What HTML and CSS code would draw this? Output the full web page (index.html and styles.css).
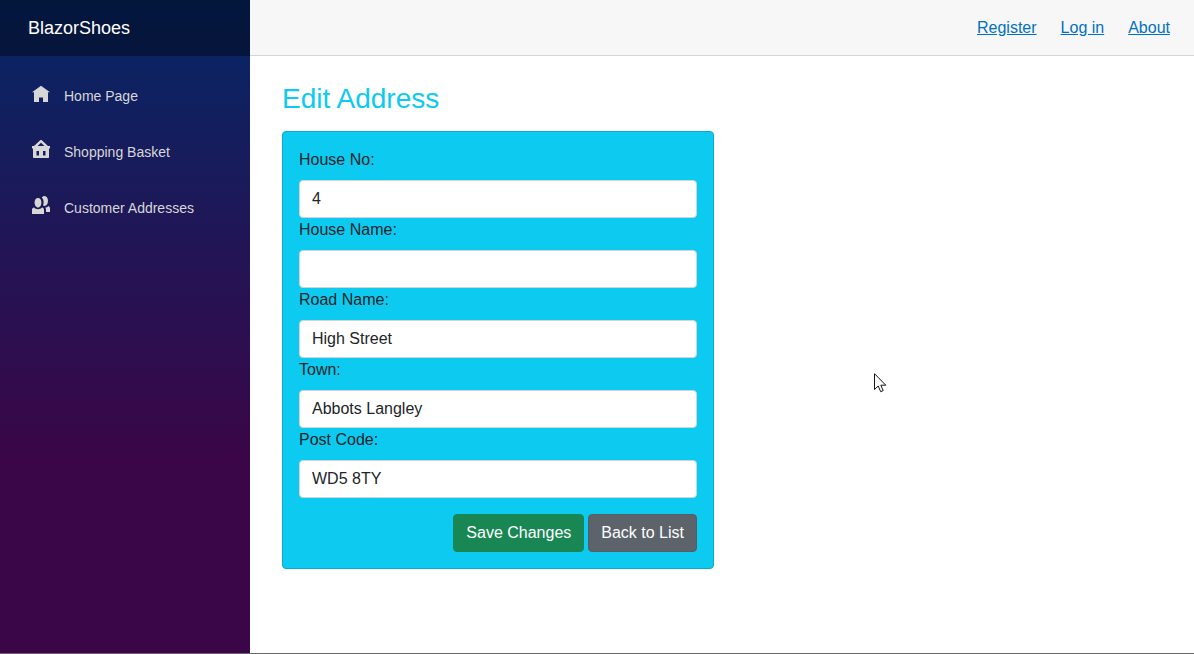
FILE: index.html
```html
<!DOCTYPE html>
<html lang="en">
<head>
  <meta charset="utf-8">
  <meta name="viewport" content="width=device-width, initial-scale=1">
  <title>Edit Address</title>
  <link rel="stylesheet" href="styles.css">
</head>
<body>
  <div class="page">
    <aside class="sidebar">
      <div class="brand-bar"><a class="brand" href="#">BlazorShoes</a></div>
      <nav class="nav">
        <a class="nav-link" href="#">
          <svg class="nav-icon" viewBox="0 0 18 18" aria-hidden="true"><path d="M9 1.800 0 8.300h2V18h5v-4.500h4V18h5V8.300h2z"/></svg>
          <span>Home Page</span>
        </a>
        <a class="nav-link" href="#">
          <svg class="nav-icon" viewBox="0 0 18 18" aria-hidden="true"><path fill-rule="evenodd" d="M9 0c.5 0 .8.1 1.100.4L16 6h2v2.500h-1v8.700c0 .5-.3.8-.8.8H1.800c-.5 0-.8-.3-.8-.8V8.500H0V6h2L7.900.4C8.200.1 8.500 0 9 0zM9 2.800 5.600 6h6.800zM4.500 11v4.500H7V11zM11 11v4.500h2.500V11z"/></svg>
          <span>Shopping Basket</span>
        </a>
        <a class="nav-link" href="#">
          <svg class="nav-icon" viewBox="0 0 18 18" aria-hidden="true"><path d="M12.600 0c-1.200 0-2.200.6-2.800 1.500 1.200 1.200 1.800 2.800 1.800 4.800 0 1.200-.2 2.300-.6 3.200.5.3 1 .4 1.600.4 2.100 0 3.400-2.300 3.400-4.900S14.700 0 12.600 0z"/><path d="M16.400 10c-.9 1-2 1.500-3.200 1.600.6.700.8 1.400.8 2.200V16h4v-3.500c0-1.200-.6-2.100-1.600-2.500z"/><path d="M6 2C3.900 2 2.600 4 2.600 6.500s1.300 5 3.400 5 3.400-2.500 3.400-5S8.100 2 6 2z"/><path d="M2 11.500C.8 11.700 0 12.500 0 13.800V18h12v-4.200c0-1.300-.8-2.100-2-2.300-1 1.200-2.400 1.700-4 1.700s-3-.5-4-1.700z"/></svg>
          <span>Customer Addresses</span>
        </a>
      </nav>
    </aside>
    <div class="main">
      <header class="top-row">
        <a class="top-link" href="#">Register</a>
        <a class="top-link" href="#">Log in</a>
        <a class="top-link" href="#">About</a>
      </header>
      <main class="content">
        <h1 class="title">Edit Address</h1>
        <form class="card">
          <label class="label" for="house-no">House No:</label>
          <input class="field" id="house-no" type="text" value="4">
          <label class="label" for="house-name">House Name:</label>
          <input class="field" id="house-name" type="text" value="">
          <label class="label" for="road-name">Road Name:</label>
          <input class="field" id="road-name" type="text" value="High Street">
          <label class="label" for="town">Town:</label>
          <input class="field" id="town" type="text" value="Abbots Langley">
          <label class="label" for="post-code">Post Code:</label>
          <input class="field" id="post-code" type="text" value="WD5 8TY">
          <div class="actions">
            <button class="button button-save" type="submit">Save Changes</button>
            <button class="button button-back" type="button">Back to List</button>
          </div>
        </form>
      </main>
    </div>
  </div>
  <svg class="pointer" viewBox="0 0 13 20" aria-hidden="true"><path d="M.5.700v15.800l3.700-3.500 2.500 5.700 2.500-1.100-2.400-5.400h5z" fill="#fff" stroke="#14141f"/></svg>
</body>
</html>
```
FILE: styles.css
```css
*,
*::before,
*::after {
  box-sizing: border-box;
}

body {
  margin: 0;
  color: #212529;
  background: #fff;
  font-family: "Liberation Sans", Arial, sans-serif;
  font-size: 16px;
  line-height: 24px;
}

.page {
  display: flex;
  min-height: 100vh;
  border-bottom: 1px solid #696969;
}

.sidebar {
  flex: none;
  width: 250px;
  background-image: linear-gradient(180deg, #052767 0%, #3a0647 70%);
}

.brand-bar {
  display: flex;
  align-items: center;
  height: 56px;
  padding: 0 28px;
  background: rgba(0, 0, 0, 0.4);
}

.brand {
  color: #fff;
  font-size: 18px;
  text-decoration: none;
}

.nav {
  display: flex;
  flex-direction: column;
  gap: 8px;
  padding: 16px 12px;
}

.nav-link {
  display: flex;
  align-items: center;
  gap: 14px;
  height: 48px;
  padding: 0 20px;
  color: #d7d7d7;
  font-size: 14px;
  text-decoration: none;
}

.nav-icon {
  width: 18px;
  height: 18px;
  margin-bottom: 6px;
  fill: currentColor;
}

.main {
  flex: 1;
  min-width: 0;
}

.top-row {
  display: flex;
  align-items: center;
  justify-content: flex-end;
  gap: 24px;
  height: 56px;
  padding: 0 24px;
  background: #f7f7f7;
  border-bottom: 1px solid #d6d5d5;
}

.top-link {
  color: #0071c1;
}

.content {
  padding: 26px 24px 24px 32px;
}

.title {
  margin: 0 0 16px;
  color: #0dcaf0;
  font-size: 28px;
  font-weight: 400;
  line-height: 33px;
}

.card {
  width: calc(50% - 12px);
  padding: 16px;
  background: #0dcaf0;
  border: 1px solid #0babcd;
  border-radius: 4px;
}

.label {
  display: block;
  margin-bottom: 8px;
}

.field {
  display: block;
  width: 100%;
  height: 38px;
  padding: 6px 12px;
  color: #212529;
  background: #fff;
  border: 1px solid #ced4da;
  border-radius: 4px;
  font: inherit;
}

.actions {
  display: flex;
  justify-content: flex-end;
  gap: 4px;
  margin-top: 16px;
}

.button {
  padding: 6px 12px;
  color: #fff;
  border: 1px solid transparent;
  border-radius: 4px;
  font: inherit;
}

.button-save {
  background: #198754;
  border-color: #198754;
}

.button-back {
  background: #5c636a;
  border-color: #565e64;
}

.pointer {
  position: absolute;
  top: 373px;
  left: 874px;
  width: 13px;
  height: 20px;
}
```
